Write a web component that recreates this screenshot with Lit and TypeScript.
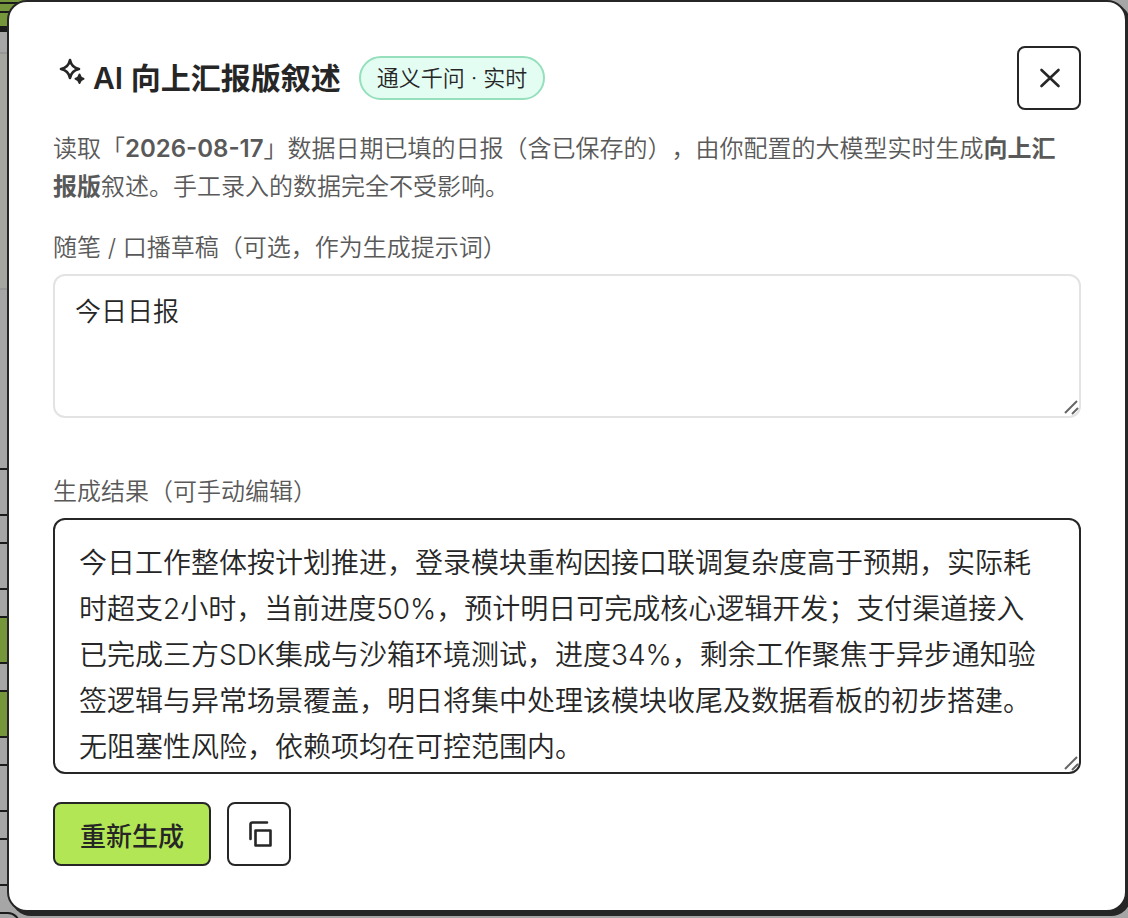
import { LitElement, html, css } from "lit";
import { customElement, state } from "lit/decorators.js";

@customElement("page-backdrop")
class PageBackdrop extends LitElement {
  static styles = css`
    :host {
      display: block;
      position: absolute;
      inset: 0;
      overflow: hidden;
      background: #a6a6a6;
    }
    .banner {
      width: 24px;
      height: 26px;
      box-sizing: border-box;
      background: #75963a;
      display: flex;
      flex-direction: column;
      gap: 7px;
      padding-top: 2px;
    }
    .rule {
      height: 2px;
      background: #1b1b1b;
    }
    .bar {
      width: 24px;
      height: 6px;
      background: #1b1b1b;
    }
    .strip {
      height: 20px;
      border-bottom: 2px solid #979797;
    }
    .hero {
      height: 234px;
      background: #a5a69f;
      border-bottom: 2px solid #979797;
    }
    .list {
      display: flex;
      flex-direction: column;
      gap: 26px;
      padding-top: 178px;
    }
    .item {
      width: 24px;
      height: 44px;
      background: #a6a6a6;
      border: solid #1b1b1b;
      border-width: 2px 0;
    }
    .item.on {
      background: #75963a;
    }
    .tab {
      width: 18px;
      height: 44px;
      border: 2px solid #1b1b1b;
      border-left: 0;
      border-radius: 0 12px 0 0;
    }
  `;
  render() {
    return html`
      <div class="banner"><div class="rule"></div><div class="rule"></div></div>
      <div class="bar"></div>
      <div class="strip"></div>
      <div class="hero"></div>
      <div class="list">
        ${[0, 0, 1, 1, 0, 0].map((on) => html`<div class="item ${on ? "on" : ""}"></div>`)}
        <div class="tab"></div>
      </div>
    `;
  }
}

@customElement("app-root")
class AppRoot extends LitElement {
  @state() note = "今日日报";
  @state() result =
    "今日工作整体按计划推进，登录模块重构因接口联调复杂度高于预期，实际耗时超支2小时，当前进度50%，预计明日可完成核心逻辑开发；支付渠道接入已完成三方SDK集成与沙箱环境测试，进度34%，剩余工作聚焦于异步通知验签逻辑与异常场景覆盖，明日将集中处理该模块收尾及数据看板的初步搭建。无阻塞性风险，依赖项均在可控范围内。";

  static styles = css`
    :host {
      display: block;
      position: relative;
      min-height: 100vh;
      box-sizing: border-box;
      overflow: hidden;
      color: #262626;
      font-family: Inter, "Noto Sans CJK SC", sans-serif;
      font-weight: 350;
      text-spacing-trim: space-all;
    }
    * {
      box-sizing: border-box;
    }
    .dialog {
      position: relative;
      margin: 0 1px 6px 7px;
      padding: 44px;
      background: #fff;
      border: 2px solid #262626;
      border-radius: 20px;
      box-shadow: 4px 4px 0 #262626;
      display: flex;
      flex-direction: column;
    }
    header {
      display: flex;
      align-items: center;
      justify-content: space-between;
    }
    .title {
      display: flex;
      align-items: center;
      gap: 18px;
    }
    h1 {
      display: flex;
      align-items: center;
      gap: 4px;
      margin: 0;
      padding-left: 4px;
      font-size: 30px;
      line-height: 40px;
      font-weight: 600;
    }
    .spark {
      width: 32px;
      height: 32px;
      margin-bottom: 12px;
    }
    .tag {
      height: 44px;
      padding: 0 16px;
      border: 2px solid #95dfbd;
      border-radius: 22px;
      background: #e3fdf3;
      font-size: 22px;
      line-height: 40px;
    }
    button {
      height: 64px;
      padding: 0;
      border: 2px solid #262626;
      border-radius: 8px;
      background: #fff;
      color: inherit;
      font: inherit;
      display: grid;
      place-items: center;
    }
    .square {
      width: 64px;
    }
    .primary {
      padding: 0 25px;
      background: #b2e655;
      font-size: 26px;
      font-weight: 500;
    }
    p {
      margin: 20px 0 0;
      padding-right: 8px;
      font-size: 24px;
      line-height: 38px;
      color: #595959;
    }
    strong {
      font-weight: 600;
    }
    label {
      margin-top: 24px;
      font-size: 24px;
      line-height: 36px;
      color: #595959;
    }
    textarea {
      display: block;
      width: 100%;
      margin-top: 8px;
      border: 2px solid #e3e3e3;
      border-radius: 12px;
      background: #fff;
      color: #262626;
      font-family: inherit;
      font-weight: inherit;
      text-spacing-trim: inherit;
      resize: none;
      overflow: hidden;
      outline: none;
    }
    .field {
      position: relative;
    }
    .grip {
      position: absolute;
      right: 1px;
      bottom: 2px;
      width: 16px;
      height: 16px;
      pointer-events: none;
    }
    .note {
      height: 144px;
      padding: 16px 20px;
      font-size: 26px;
      line-height: 40px;
    }
    .second {
      margin-top: 56px;
    }
    .result {
      height: 256px;
      padding: 20px 36px 20px 24px;
      border-color: #262626;
      font-size: 28px;
      line-height: 46px;
    }
    .actions {
      display: flex;
      gap: 16px;
      margin-top: 28px;
    }
  `;

  grip() {
    return html`<svg class="grip" viewBox="0 0 16 16" fill="none" stroke="#666" stroke-width="2" aria-hidden="true">
      <path d="M1 13L13 1M8 14L14 8" />
    </svg>`;
  }

  render() {
    return html`
      <page-backdrop aria-hidden="true"></page-backdrop>
      <section class="dialog" role="dialog" aria-labelledby="title">
        <header>
          <div class="title">
            <h1 id="title">
              <svg class="spark" viewBox="0 0 32 32" fill="none" stroke="#262626" stroke-width="2.6" stroke-linejoin="round" aria-hidden="true">
                <path d="M13 4Q14.500 11.500 22 13Q14.500 14.500 13 22Q11.500 14.500 4 13Q11.500 11.500 13 4Z" />
                <path d="M22.500 18.500Q23.200 22 26.500 22.700Q23.200 23.500 22.500 27Q21.800 23.500 18.500 22.700Q21.800 22 22.500 18.500Z" fill="#262626" stroke-width="2" />
              </svg>
              AI 向上汇报版叙述
            </h1>
            <span class="tag">通义千问 · 实时</span>
          </div>
          <button class="square" aria-label="关闭">
            <svg width="32" height="32" viewBox="0 0 32 32" fill="none" stroke="#262626" stroke-width="2.600" stroke-linecap="round">
              <path d="M8.500 8L25.500 24M25.500 8L8.500 24" />
            </svg>
          </button>
        </header>
        <p>
          读取「<strong>2026-08-17</strong>」数据日期已填的日报（含已保存的），由你配置的大模型实时生成<strong>向上汇报版</strong>叙述。手工录入的数据完全不受影响。
        </p>
        <label for="note">随笔 / 口播草稿（可选，作为生成提示词）</label>
        <div class="field">
          <textarea id="note" class="note" .value=${this.note}></textarea>
          ${this.grip()}
        </div>
        <label class="second" for="result">生成结果（可手动编辑）</label>
        <div class="field">
          <textarea id="result" class="result" .value=${this.result}></textarea>
          ${this.grip()}
        </div>
        <div class="actions">
          <button class="primary">重新生成</button>
          <button class="square" aria-label="复制">
            <svg width="32" height="32" viewBox="0 0 32 32" fill="none" stroke="#262626" stroke-width="2.600" stroke-linejoin="round" stroke-linecap="round">
              <path d="M7.500 21V6.500Q7.500 4.500 9.500 4.500H24" />
              <path d="M12.500 12.500H27.500V27.500H12.500Z" />
            </svg>
          </button>
        </div>
      </section>
    `;
  }
}
